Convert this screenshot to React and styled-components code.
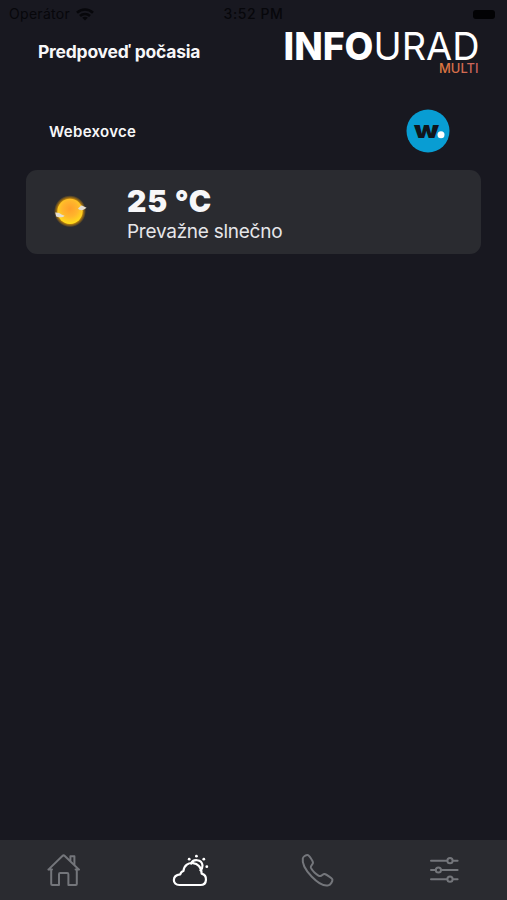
import React, { useState } from "react";
import styled, { createGlobalStyle } from "styled-components";

const HomeIcon = () => (
    <Icon viewBox="0 0 40 40">
        <path d="M8.2 20.6V34Q8.2 35 9.2 35H16V24.2Q16 23 17.2 23H24.2Q25.4 23 25.4 24.2V35H32.8Q33.8 35 33.8 34V20.6" />
        <path d="M5.4 19.6L19.4 6Q20.6 4.8 21.8 6L36 19.6M5.4 19.6H9M36 19.6H32.6" />
        <path d="M27.4 10.4V6.2H31.4V14.6" />
    </Icon>
);

const WeatherIcon = () => (
    <Icon viewBox="0 0 40 40" strokeWidth="2.2">
        <path d="M9.4 35H30.4C37.6 35 37.6 25 31.6 23.6C31.6 10.6 14.8 9.4 13.4 21C11.8 21.4 10.7 22.4 10.2 24.4C1.8 25.4 2 35 9.4 35Z" />
        <path d="M21.2 13.6C22.8 8.8 31.8 8.8 32.5 15.4C32.6 18 31.7 19.4 30.4 20.4" />
        <g fill="currentColor" stroke="none">
            <circle cx="19.2" cy="9.2" r="1.4" />
            <circle cx="26.4" cy="6.2" r="1.4" />
            <circle cx="33.8" cy="9.2" r="1.4" />
            <circle cx="36.8" cy="16.7" r="1.4" />
        </g>
    </Icon>
);

const PhoneIcon = () => (
    <Icon viewBox="0 0 40 40">
        <path d="M5.8 8.4C6.2 6.6 8.7 5 10.6 5C12 5 16 11 16 12.7C16 14.4 13.6 15.5 13.8 17.2C14.2 20 20.6 26 23.3 26C25 25.8 26 23.6 27.7 24C29.3 24.5 34.8 28 35.4 29.4C35.8 31.3 33.6 34.8 31.3 35.4C22.6 37.5 4 18.6 5.8 8.4Z" />
    </Icon>
);

const SettingsIcon = () => (
    <Icon viewBox="0 0 40 40">
        <path d="M7 10.7H23M29 10.7H33.6M7 20H11.4M17.4 20H33.6M7 29.2H23M29 29.2H33.6" />
        <circle cx="26" cy="10.7" r="2.6" />
        <circle cx="14.4" cy="20" r="2.6" />
        <circle cx="26" cy="29.2" r="2.6" />
    </Icon>
);

const SunIcon = () => (
    <svg width="40" height="40" viewBox="0 0 40 40">
        <defs>
            <radialGradient id="glow">
                <stop offset="0.72" stopColor="#f2a100" />
                <stop offset="1" stopColor="#f2a100" stopOpacity="0" />
            </radialGradient>
            <radialGradient id="sun" cx="0.5" cy="0.4" r="0.62">
                <stop offset="0" stopColor="#ff9f2a" />
                <stop offset="0.5" stopColor="#ffb52c" />
                <stop offset="1" stopColor="#ffe11a" />
            </radialGradient>
        </defs>
        <circle cx="20" cy="19.3" r="16" fill="url(#glow)" />
        <circle cx="20" cy="19.3" r="12.6" fill="url(#sun)" />
        <path d="M5.2 20.5C8 20.3 10 21.2 11.5 22.6L14.6 23.8C13.4 25.8 8 25.6 6.2 24.6Z" fill="#e3ddd2" />
        <path d="M28 16.5C30 15.5 30.5 12.8 32.4 13.8L36.6 15.8L34 17.4C32 18.6 29.5 18.4 28 16.5Z" fill="#e3ddd2" />
    </svg>
);

const TABS = [
    { id: "home", icon: HomeIcon },
    { id: "weather", icon: WeatherIcon },
    { id: "phone", icon: PhoneIcon },
    { id: "settings", icon: SettingsIcon },
];

const App = () => {

    const [tab, setTab] = useState("weather");

    return (
        <Screen>
            <GlobalStyle />
            <StatusBar>
                <Carrier>
                    Operátor
                    <svg width="18" height="13" viewBox="0 0 18 13" fill="none" stroke="currentColor" strokeWidth="2.6">
                        <path d="M1 4.8C5.5 0.4 12.5 0.4 17 4.8" />
                        <path d="M4 8C6.8 5.3 11.2 5.3 14 8" />
                        <path d="M9 12.6L6.2 9.8C7.8 8.4 10.2 8.4 11.8 9.8Z" fill="currentColor" stroke="none" />
                    </svg>
                </Carrier>
                <Clock>3:52 PM</Clock>
                <BatteryArea>
                    <Battery />
                </BatteryArea>
            </StatusBar>
            <Header>
                <Title>Predpoveď počasia</Title>
                <Logo viewBox="0 -10 198 60">
                    <defs>
                        <linearGradient id="multi" x1="0" x2="1">
                            <stop offset="0" stopColor="#e27a3c" />
                            <stop offset="1" stopColor="#c9605f" />
                        </linearGradient>
                    </defs>
                    <text x="1.5" y="32" fontSize="38.5" fontWeight="800" textLength="90" lengthAdjust="spacingAndGlyphs">INFO</text>
                    <text x="91.5" y="32" fontSize="38.5" fontWeight="400" textLength="106" lengthAdjust="spacingAndGlyphs">URAD</text>
                    <text x="157" y="44.5" fontSize="12.6" fontWeight="500" fill="url(#multi)" textLength="39.5" lengthAdjust="spacingAndGlyphs">MULTI</text>
                </Logo>
            </Header>
            <Place>
                <PlaceName>Webexovce</PlaceName>
                <Badge viewBox="0 0 44 44">
                    <circle cx="22" cy="22" r="21.5" fill="#089dd3" />
                    <text x="8" y="28.6" fontSize="24" fontWeight="900" fill="#10151c" textLength="25" lengthAdjust="spacingAndGlyphs">w</text>
                    <circle cx="35" cy="25.7" r="3.5" fill="#fff" />
                </Badge>
            </Place>
            <Card>
                <SunIcon />
                <Forecast>
                    <Temperature>25 °C</Temperature>
                    <Summary>Prevažne slnečno</Summary>
                </Forecast>
            </Card>
            <TabBar>
                {TABS.map(({ id, icon: TabIcon }) => (
                    <Tab key={id} $active={tab === id} onClick={() => setTab(id)}>
                        <TabIcon />
                    </Tab>
                ))}
            </TabBar>
        </Screen>
    );
}

export default App;

const GlobalStyle = createGlobalStyle`
  body {
    margin: 0;
    background-color: #181820;
  }
`;

const Screen = styled.div`
  height: 900px;
  display: flex;
  flex-direction: column;
  background-color: #181820;
  color: #f7f7f9;
  font-family: Inter, "Liberation Sans", sans-serif;
`;

const StatusBar = styled.div`
  height: 28px;
  padding: 0 12px 0 9px;
  display: grid;
  grid-template-columns: 1fr auto 1fr;
  align-items: center;
  color: #07070b;
  font-size: 14px;
  line-height: 28px;
`;

const Carrier = styled.div`
  display: flex;
  align-items: center;
  gap: 6px;
  letter-spacing: 0.3px;
`;

const Clock = styled.div`
  margin-left: 3px;
  font-weight: 500;
  letter-spacing: 0.6px;
`;

const BatteryArea = styled.div`
  display: flex;
  justify-content: flex-end;
`;

const Battery = styled.div`
  width: 22px;
  height: 9px;
  border-radius: 3px;
  background-color: #020204;
`;

const Header = styled.header`
  height: 48px;
  padding: 0 27px 0 38px;
  display: flex;
  justify-content: space-between;
`;

const Title = styled.h1`
  margin: 0;
  font-size: 17.5px;
  font-weight: 700;
  letter-spacing: -0.22px;
  line-height: 48px;
`;

const Logo = styled.svg`
  width: 198px;
  height: 60px;
  margin-top: -10px;
  fill: #fff;
  font-family: Inter, sans-serif;
`;

const Place = styled.div`
  height: 44px;
  margin-top: 33px;
  padding: 0 57px 0 49px;
  display: flex;
  align-items: center;
  justify-content: space-between;
`;

const PlaceName = styled.span`
  font-size: 15px;
  font-weight: 600;
  letter-spacing: 0.3px;
`;

const Badge = styled.svg`
  width: 44px;
  height: 44px;
`;

const Card = styled.section`
  height: 84px;
  margin: 17px 26px 0;
  padding: 6px 24px 0;
  box-sizing: border-box;
  display: flex;
  align-items: center;
  gap: 37px;
  border-radius: 11px;
  background-color: #2a2b30;

  > svg {
    margin-top: -6px;
  }
`;

const Forecast = styled.div`
  display: flex;
  flex-direction: column;
`;

const Temperature = styled.strong`
  font-size: 30px;
  font-weight: 900;
  letter-spacing: 0.8px;
  line-height: 33px;
`;

const Summary = styled.span`
  color: #e6e6e9;
  font-size: 19px;
  letter-spacing: -0.26px;
  line-height: 28px;
`;

const TabBar = styled.nav`
  height: 60px;
  margin-top: auto;
  display: flex;
  background-color: #2a2b30;
`;

const Tab = styled.button`
  flex: 1;
  padding: 0;
  display: flex;
  align-items: center;
  justify-content: center;
  border: none;
  background: none;
  color: ${props => props.$active ? "#fff" : "#74767b"};
  cursor: pointer;
`;

const Icon = styled.svg.attrs(props => ({ strokeWidth: props.strokeWidth || 2 }))`
  width: 40px;
  height: 40px;
  fill: none;
  stroke: currentColor;
  stroke-linecap: round;
  stroke-linejoin: round;
`;
